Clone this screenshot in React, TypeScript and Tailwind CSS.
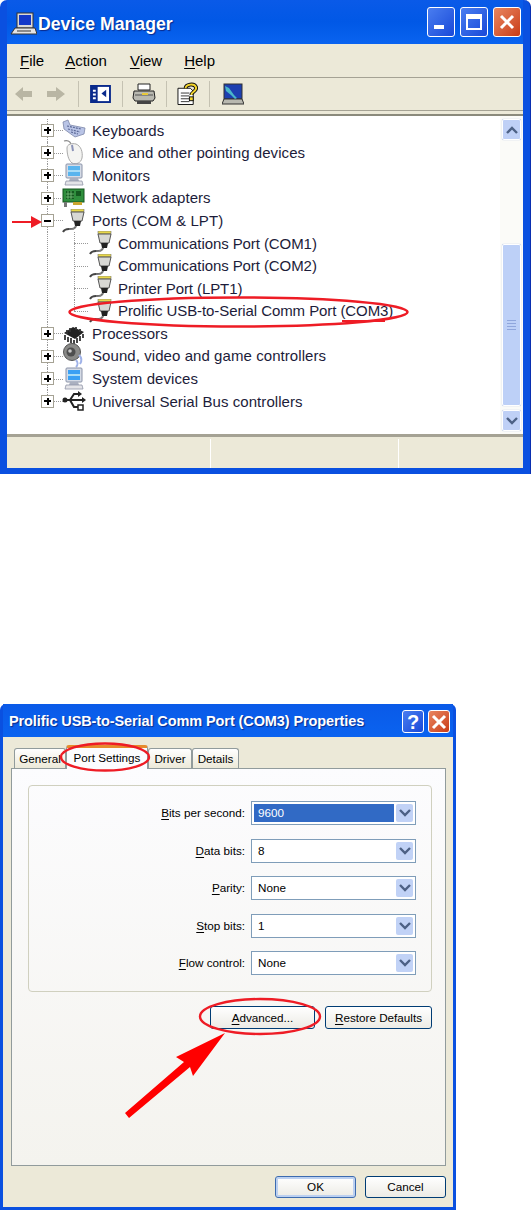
import React from 'react';

const FONT = "font-['Liberation_Sans','DejaVu_Sans',sans-serif]";

const PortIcon = () => (
  <svg width="24" height="24" viewBox="0 0 24 24" className="shrink-0">
    <rect x="9" y="0" width="13" height="3" fill="#e8d84a" stroke="#777" strokeWidth="0.6" />
    <path d="M9 3h13l-2 9h-9z" fill="#d8d8d4" stroke="#555" strokeWidth="1" />
    <path d="M12 12h7l-1 5h-5z" fill="#222" />
    <path d="M14 17c-1 3-3 3-7 3-3 0-5 1-6 3" fill="none" stroke="#444" strokeWidth="2" />
    <path d="M14 17c-1 3-3 3-7 3" fill="none" stroke="#bbb" strokeWidth="0.7" />
  </svg>
);

const KeyboardIcon = () => (
  <svg width="24" height="22" viewBox="0 0 24 22" className="shrink-0">
    <path d="M1 3l5-2 2 5 15 3-1 6-9 3-11-8z" fill="#b9c4e6" stroke="#7c86a8" strokeWidth="0.8" />
    <path d="M5 7l14 3M6 10l12 3M9 13l7 2" stroke="#5d6a98" strokeWidth="1.2" strokeDasharray="2 1" fill="none" />
  </svg>
);

const MouseIcon = () => (
  <svg width="24" height="26" viewBox="0 0 24 26" className="shrink-0">
    <path d="M2 1c3-1 6 0 7 3" fill="none" stroke="#888" strokeWidth="1.2" />
    <path d="M5 8c0-4 5-5 9-4 5 2 7 8 6 14-1 5-6 7-10 5-4-3-5-10-5-15z" fill="#f4f4f2" stroke="#aaa" strokeWidth="1" />
    <path d="M10 5l1 6" stroke="#8b93b8" strokeWidth="2" />
  </svg>
);

const MonitorIcon = ({ tall }: { tall?: boolean }) => (
  <svg width="24" height={tall ? 26 : 24} viewBox="0 0 24 24" className="shrink-0">
    <rect x="4" y="1" width="16" height="14" rx="1" fill="#d5dbe6" stroke="#8b93a8" />
    <rect x="6" y="3" width="12" height="10" fill={tall ? '#3aa0f4' : '#59b4ee'} />
    <path d="M6 8h12" stroke="#a7dcf7" strokeWidth="2" />
    <path d="M8 15h8l1 3H7z" fill="#aab0c0" />
    <path d="M4 18h16l1 4H3z" fill="#e4e4e8" stroke="#9096a8" strokeWidth="0.8" />
  </svg>
);

const NetIcon = () => (
  <svg width="24" height="20" viewBox="0 0 24 20" className="shrink-0">
    <rect x="1" y="1" width="21" height="13" fill="#2f8f3d" stroke="#14551e" />
    <path d="M4 3h8v8H4zM14 3h5v5h-5z" fill="#145a20" />
    <path d="M6 3v8M9 3v8M4 6h8M4 9h8" stroke="#7cc47f" strokeWidth="0.8" />
    <rect x="11" y="14" width="9" height="3" fill="#c9a52e" />
    <rect x="2" y="14" width="3" height="5" fill="#777" />
  </svg>
);

const ChipIcon = () => (
  <svg width="24" height="20" viewBox="0 0 24 20" className="shrink-0">
    <path d="M2 9l9-6 11 5-9 7z" fill="#222" />
    <path d="M3 11v5M6 13v5M9 14v5M12 16v4M15 14v5M18 12v5M21 10v4M5 6v4M8 4v4M14 3v3M18 5v3" stroke="#333" strokeWidth="1.8" />
  </svg>
);

const SpeakerIcon = () => (
  <svg width="24" height="26" viewBox="0 0 24 26" className="shrink-0">
    <circle cx="10" cy="9" r="8.5" fill="#8a8a88" stroke="#555" />
    <circle cx="9" cy="9" r="4.5" fill="#4e4e4e" />
    <circle cx="8" cy="8" r="1.8" fill="#c9c9c9" />
    <path d="M17 12c3 3 3 6 1 9M14 17c2 2 2 5 0 7" fill="none" stroke="#9fb2e8" strokeWidth="2" />
  </svg>
);

const UsbIcon = () => (
  <svg width="24" height="24" viewBox="0 0 24 24" className="shrink-0">
    <path d="M1 11h20M8 11l4-6h4M8 11l4 7h5" fill="none" stroke="#222" strokeWidth="2" />
    <circle cx="3" cy="11" r="2.5" fill="#222" />
    <path d="M20 8l4 3-4 3z" fill="#222" />
    <path d="M16 2l4 3-4 3z" fill="#222" />
    <rect x="16" y="16" width="5" height="5" fill="#fff" stroke="#222" strokeWidth="1.5" />
  </svg>
);

const Expander = ({ open }: { open?: boolean }) => (
  <span className="relative z-10 flex h-[13px] w-[13px] items-center justify-center border border-[#a5a294] bg-white">
    <span className="absolute h-[2px] w-[7px] bg-black" />
    {!open && <span className="absolute h-[7px] w-[2px] bg-black" />}
  </span>
);

interface TreeRow {
  label: React.ReactNode;
  icon: React.ReactNode;
  child?: boolean;
  open?: boolean;
  last?: boolean;
}

const treeRows: TreeRow[] = [
  { label: 'Keyboards', icon: <KeyboardIcon /> },
  { label: 'Mice and other pointing devices', icon: <MouseIcon /> },
  { label: 'Monitors', icon: <MonitorIcon /> },
  { label: 'Network adapters', icon: <NetIcon /> },
  { label: 'Ports (COM & LPT)', icon: <PortIcon />, open: true },
  { label: 'Communications Port (COM1)', icon: <PortIcon />, child: true },
  { label: 'Communications Port (COM2)', icon: <PortIcon />, child: true },
  { label: 'Printer Port (LPT1)', icon: <PortIcon />, child: true },
  { label: 'Prolific USB-to-Serial Comm Port (COM3)', icon: <PortIcon />, child: true, last: true },
  { label: 'Processors', icon: <ChipIcon /> },
  { label: 'Sound, video and game controllers', icon: <SpeakerIcon /> },
  { label: 'System devices', icon: <MonitorIcon tall /> },
  { label: 'Universal Serial Bus controllers', icon: <UsbIcon />, last: true },
];

const Row = ({ row, index }: { row: TreeRow; index: number }) => (
  <div className="relative flex h-[22.6px] items-center text-[15px] text-[#1c1c3a]">
    <span className={`absolute left-[40px] top-0 w-0 border-l border-dotted border-[#999] ${index === 12 ? 'h-[11px]' : 'h-full'}`} />
    {row.child ? (
      <>
        <span className={`absolute left-[67px] top-0 w-0 border-l border-dotted border-[#999] ${row.last ? 'h-[11px]' : 'h-full'}`} />
        <span className="absolute left-[67px] top-[11px] w-[14px] border-t border-dotted border-[#999]" />
        <span className="ml-[82px] mr-[5px] flex w-[24px] justify-center">{row.icon}</span>
      </>
    ) : (
      <>
        <span className="absolute left-[40px] top-[11px] w-[16px] border-t border-dotted border-[#999]" />
        <span className="ml-[34px]">
          <Expander open={row.open} />
        </span>
        <span className="ml-[8px] mr-[6px] flex w-[24px] justify-center">{row.icon}</span>
      </>
    )}
    <span className={`whitespace-nowrap pt-[1px] ${row.child ? 'tracking-[-0.08px]' : 'tracking-[0.07px]'}`}>{row.label}</span>
  </div>
);

const Chevron = ({ up }: { up?: boolean }) => (
  <svg width="12" height="8" viewBox="0 0 12 8">
    <path d={up ? 'M1 7l5-5 5 5' : 'M1 1l5 5 5-5'} fill="none" stroke="#4d6185" strokeWidth="2.4" />
  </svg>
);

const ScrollButton = ({ up }: { up?: boolean }) => (
  <div className="flex h-[21px] w-[19px] items-center justify-center rounded-[2px] border border-white bg-[#bfd0f6] shadow-[0_0_1px_#8ea4d8]">
    <Chevron up={up} />
  </div>
);

const Scrollbar = () => (
  <div className="flex w-[23px] shrink-0 flex-col items-center bg-[#fbfbf8] pt-[3px] pb-[3px]">
    <ScrollButton up />
    <div className="h-[104px] w-full shrink-0" />
    <div className="flex h-[162px] w-[19px] flex-col items-center justify-center gap-[2px] rounded-[2px] border border-white bg-[#bdd0f7] shadow-[0_0_1px_#8ea4d8]">
      <span className="h-px w-[9px] bg-[#8fa6dc]" />
      <span className="h-px w-[9px] bg-[#8fa6dc]" />
      <span className="h-px w-[9px] bg-[#8fa6dc]" />
      <span className="h-px w-[9px] bg-[#8fa6dc]" />
    </div>
    <div className="mt-[4px]">
      <ScrollButton />
    </div>
  </div>
);

const CaptionButton = ({ kind, className }: { kind: 'min' | 'max' | 'close' | 'help'; className: string }) => (
  <div
    className={`flex items-center justify-center rounded-[3px] border border-white ${
      kind === 'close' ? 'bg-gradient-to-br from-[#e8855f] to-[#c93a12]' : 'bg-gradient-to-br from-[#4a7df0] to-[#1a48d8]'
    } ${className}`}
  >
    {kind === 'min' && <span className="mt-[10px] mr-[4px] h-[4px] w-[10px] bg-white" />}
    {kind === 'max' && (
      <span className="h-[16px] w-[16px] border-2 border-t-[5px] border-white" />
    )}
    {kind === 'close' && (
      <svg width="16" height="16" viewBox="0 0 16 16">
        <path d="M2 2l12 12M14 2L2 14" stroke="#fff" strokeWidth="3" />
      </svg>
    )}
    {kind === 'help' && <span className="text-[20px] font-bold leading-none text-white">?</span>}
  </div>
);

const MenuItem = ({ first, rest, className }: { first: string; rest: string; className: string }) => (
  <span className={className}>
    <span className="underline underline-offset-2">{first}</span>
    {rest}
  </span>
);

const ToolSep = ({ className }: { className: string }) => <span className={`h-[26px] w-px bg-[#c5c2b2] ${className}`} />;

const Toolbar = () => (
  <div className="flex h-[33px] items-center border-b border-[#a5a294]">
    <svg width="50" height="18" viewBox="0 0 50 18" className="ml-[8px]">
      <path d="M8 2v4h9v6H8v4L0 9z" fill="#b9b6a4" />
      <path d="M41 2v4h-9v6h9v4l9-7z" fill="#b9b6a4" />
    </svg>
    <ToolSep className="ml-[13px]" />
    <svg width="21" height="18" viewBox="0 0 22 19" className="ml-[11px]">
      <rect x="1" y="1" width="20" height="17" fill="#fff" stroke="#0a2a8c" strokeWidth="2" />
      <rect x="1" y="1" width="7" height="17" fill="#0a2a8c" />
      <path d="M3 5h3v2H3zM3 9h3v2H3zM3 13h3v2H3z" fill="#fff" />
      <path d="M17 5v8l-5-4z" fill="#0a2a8c" />
    </svg>
    <ToolSep className="ml-[11px]" />
    <svg width="24" height="22" viewBox="0 0 24 22" className="ml-[9px]">
      <path d="M6 1h12v6H6z" fill="#fff" stroke="#222" />
      <path d="M2 8h20l1 7-2 3H3l-2-3z" fill="#b8b8b0" stroke="#222" />
      <path d="M3 12h18" stroke="#555" />
      <rect x="10" y="10" width="6" height="2" fill="#e8c93a" />
      <path d="M5 18h14v3H5z" fill="#444" />
    </svg>
    <ToolSep className="ml-[10px]" />
    <svg width="21" height="24" viewBox="0 0 22 24" className="ml-[10px]">
      <path d="M1 6h13l3 3v14H1z" fill="#fff" stroke="#111" />
      <path d="M4 11h9M4 14h9M4 17h9M4 20h9" stroke="#333" />
      <path d="M9 6c0-4 9-6 11-1 1 4-5 5-5 8" fill="none" stroke="#111" strokeWidth="4" />
      <path d="M9 6c0-4 9-6 11-1 1 4-5 5-5 8" fill="none" stroke="#f3d52c" strokeWidth="2" />
      <rect x="13" y="15" width="4" height="4" fill="#f3d52c" stroke="#111" />
    </svg>
    <ToolSep className="ml-[11px]" />
    <svg width="22" height="22" viewBox="0 0 22 22" className="ml-[12px]">
      <rect x="2" y="1" width="18" height="15" fill="#1d3fb0" stroke="#333" />
      <path d="M2 16h18l2 5H0z" fill="#b8b8b0" stroke="#333" />
      <path d="M3 3l4 2 5 7 3 3-2 1-4-4-5-4z" fill="#49b6c9" />
    </svg>
  </div>
);

const DeviceManager = () => (
  <div className="flex h-[474px] w-[531px] flex-col rounded-t-[7px] bg-[#0a50e0] px-[7px] pb-[6px] border-r border-[#0a2fb0]">
    <div className="flex h-[44px] shrink-0 items-center bg-gradient-to-b from-[#0a5ae8] via-[#0158e6] to-[#0a63f0] pt-[5px]">
      <svg width="28" height="28" viewBox="0 0 28 28" className="ml-[2px] mr-[1px]">
        <rect x="8" y="2" width="16" height="15" fill="#d9d9d9" stroke="#333" />
        <rect x="10" y="4" width="12" height="10" fill="#1238c9" />
        <path d="M6 17h20l2 6H2z" fill="#e4e4e4" stroke="#333" />
        <path d="M8 20h14" stroke="#333" />
      </svg>
      <span className="text-[17.7px] font-bold text-white [text-shadow:1px_1px_1px_#0a2a8c]">Device Manager</span>
      <div className="ml-auto mr-[2px] -mt-[5px] flex gap-[5px]">
        <CaptionButton kind="min" className="h-[30px] w-[28px]" />
        <CaptionButton kind="max" className="h-[30px] w-[28px]" />
        <CaptionButton kind="close" className="h-[30px] w-[28px]" />
      </div>
    </div>
    <div className="flex min-h-0 flex-1 flex-col bg-[#ece9d8] text-black">
      <div className="relative h-[34px] shrink-0 border-b border-[#a5a294] pt-[2px] text-[15px]">
        <div className="flex h-full items-center">
          <MenuItem first="F" rest="ile" className="ml-[13px]" />
          <MenuItem first="A" rest="ction" className="ml-[21px]" />
          <MenuItem first="V" rest="iew" className="ml-[23px]" />
          <MenuItem first="H" rest="elp" className="ml-[22px]" />
        </div>
      </div>
      <Toolbar />
      <div className="h-[5px] shrink-0 border-b-2 border-[#8b8a7c]" />
      <div className="flex h-[318px] shrink-0 bg-white">
        <div className="flex-1 pt-[3px]">
          {treeRows.map((row, i) => (
            <Row key={i} row={row} index={i} />
          ))}
        </div>
        <Scrollbar />
      </div>
      <div className="flex flex-1 border-t-[3px] border-[#a5a294] pt-[2px]">
        <span className="w-[204px] border-r border-white" />
        <span className="w-[188px] border-r border-white" />
      </div>
    </div>
  </div>
);

const tabs = [
  { label: 'General', w: 'w-[52px]' },
  { label: 'Port Settings', w: 'w-[82px]', active: true },
  { label: 'Driver', w: 'w-[44px]' },
  { label: 'Details', w: 'w-[47px]' },
];

const ports = [
  { first: 'B', rest: 'its per second:', value: '9600', selected: true },
  { first: 'D', rest: 'ata bits:', value: '8' },
  { first: 'P', rest: 'arity:', value: 'None' },
  { first: 'S', rest: 'top bits:', value: '1' },
  { first: 'F', rest: 'low control:', value: 'None' },
];

const Combo = ({ value, selected }: { value: string; selected?: boolean }) => (
  <div className="flex h-[24px] w-[165px] items-center border border-[#7f9db9] bg-white p-[2px]">
    <span
      className={`flex h-full flex-1 items-center pl-[4px] ${selected ? 'bg-[#316ac5] text-white' : 'text-black'}`}
    >
      {value}
    </span>
    <span className="ml-[2px] flex h-full w-[17px] items-center justify-center rounded-[2px] bg-[#c1d2f6]">
      <Chevron />
    </span>
  </div>
);

const XpButton = ({ first, rest, className }: { first?: string; rest: string; className: string }) => (
  <button className={`flex items-center justify-center rounded-[3px] border border-[#003c74] bg-gradient-to-b from-white to-[#ecebe5] text-[11.7px] text-black ${className}`}>
    <span>
      {first && <span className="underline underline-offset-2">{first}</span>}
      {rest}
    </span>
  </button>
);

const Properties = () => (
  <div className="mt-[230px] flex h-[506px] w-[456px] flex-col rounded-t-[6px] bg-[#0a50e0] px-[3px] pb-[3px]">
    <div className="flex h-[33px] shrink-0 items-center bg-gradient-to-b from-[#0a5ae8] to-[#0a63f0] pl-[6px] pt-[3px]">
      <span className="whitespace-nowrap text-[14.5px] font-bold tracking-[-0.1px] text-white [text-shadow:1px_1px_1px_#0a2a8c]">
        Prolific USB-to-Serial Comm Port (COM3) Properties
      </span>
      <div className="ml-auto mr-[3px] -mt-[1px] flex gap-[4px]">
        <CaptionButton kind="help" className="h-[23px] w-[22px]" />
        <CaptionButton kind="close" className="h-[23px] w-[22px]" />
      </div>
    </div>
    <div className="flex flex-1 flex-col bg-[#ece9d8] pl-[8px] pr-[7px] text-[11.7px] text-black">
      <div className="mt-[8px] flex h-[23px] items-end pl-[3px]">
        {tabs.map(t => (
          <div
            key={t.label}
            className={`flex items-center justify-center rounded-t-[3px] border border-b-0 ${t.w} ${
              t.active
                ? 'relative z-10 -mb-px h-[24px] border-t-[3px] border-[#919b9c] border-t-[#e68b2c] bg-[#fcfcfe] pb-[2px]'
                : 'h-[20px] border-[#919b9c] bg-gradient-to-b from-white to-[#ece9d8]'
            }`}
          >
            {t.label}
          </div>
        ))}
      </div>
      <div className="flex h-[398px] flex-col border border-[#919b9c] bg-gradient-to-b from-[#fcfcfe] to-[#f4f3ee] pl-[16px] pr-[13px] pt-[16px]">
        <div className="flex h-[207px] flex-col gap-[13.5px] rounded-[4px] border border-[#d0d0bf] pt-[15px]">
          {ports.map(p => (
            <div key={p.first} className="flex items-center justify-end pr-[15px]">
              <span className="mr-[6px] whitespace-nowrap">
                <span className="underline underline-offset-2">{p.first}</span>
                {p.rest}
              </span>
              <Combo value={p.value} selected={p.selected} />
            </div>
          ))}
        </div>
        <div className="mt-[14px] flex justify-end gap-[10px]">
          <XpButton first="A" rest="dvanced..." className="h-[23px] w-[105px]" />
          <XpButton first="R" rest="estore Defaults" className="h-[23px] w-[107px]" />
        </div>
      </div>
      <div className="mt-[10px] flex justify-end gap-[9px]">
        <XpButton rest="OK" className="h-[22px] w-[81px] border-[#3c6bb0] shadow-[inset_0_0_0_2px_#bcd0f0]" />
        <XpButton rest="Cancel" className="h-[22px] w-[81px]" />
      </div>
    </div>
  </div>
);

// red marks drawn over the screenshots
const Annotations = () => (
  <svg width="531" height="1210" viewBox="0 0 531 1210" className="pointer-events-none absolute left-0 top-0 z-20">
    <ellipse cx="238.5" cy="312" rx="169" ry="14.5" fill="none" stroke="#ee1c25" strokeWidth="2.6" />
    <path d="M342 321h43" stroke="#ee1c25" strokeWidth="2" />
    <path d="M12 222h22" stroke="#ee1c25" strokeWidth="2" />
    <path d="M31 216l11 6-11 6z" fill="#ee1c25" />
    <ellipse cx="105" cy="757" rx="44" ry="13.5" fill="none" stroke="#ee1c25" strokeWidth="2.4" />
    <ellipse cx="260" cy="1016.5" rx="60" ry="17.5" fill="none" stroke="#ee1c25" strokeWidth="2.4" />
    <polygon points="125,1113 129,1118 190,1067 193,1076 225,1033 176,1057 184,1062" fill="#ff0000" />
  </svg>
);

export default function App() {
  return (
    <div className={`relative h-[1210px] w-[531px] overflow-hidden bg-white ${FONT}`}>
      <DeviceManager />
      <Properties />
      <Annotations />
    </div>
  );
}
